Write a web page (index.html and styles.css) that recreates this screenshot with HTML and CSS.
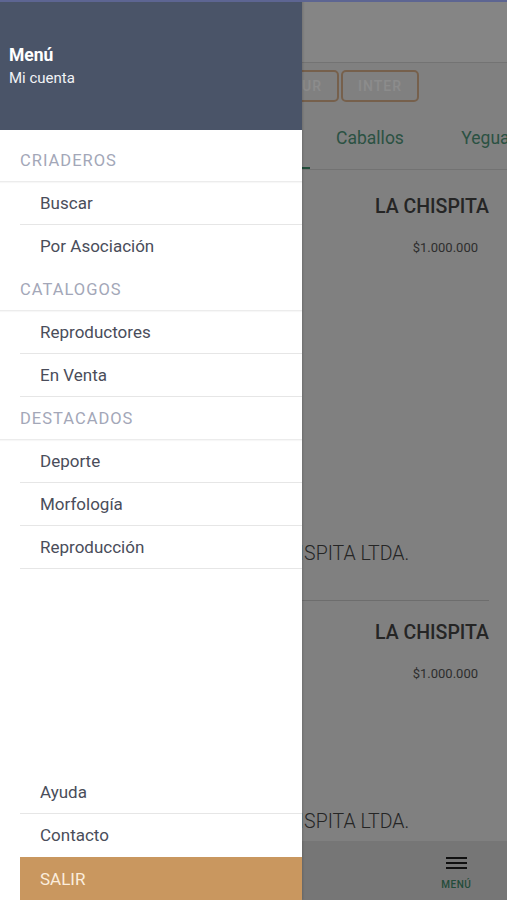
FILE: index.html
```html
<!DOCTYPE html>
<html>

<head>
  <meta name="viewport" content="width=device-width, initial-scale=1.0">
  <title>Menú</title>
  <link rel="stylesheet" href="styles.css">
</head>

<body>
  <div class="screen">
    <div class="page">
      <header class="toolbar"></header>
      <div class="filters">
        <button class="chip" type="button">AMATEUR</button>
        <button class="chip" type="button">INTER</button>
      </div>
      <nav class="tabs">
        <a class="tab active" href="#">Todos</a>
        <a class="tab" href="#">Caballos</a>
        <a class="tab" href="#">Yeguas</a>
      </nav>
      <div class="cards">
        <div class="card">
          <div class="card-top">
            <div class="photo photo-tall"></div>
            <div class="info">
              <div class="horse">LA CHISPITA</div>
              <div class="price">$1.000.000</div>
            </div>
          </div>
          <div class="owner">LA CHISPITA LTDA.</div>
        </div>
        <div class="card">
          <div class="card-top">
            <div class="photo photo-short"></div>
            <div class="info">
              <div class="horse">LA CHISPITA</div>
              <div class="price">$1.000.000</div>
            </div>
          </div>
          <div class="owner">LA CHISPITA LTDA.</div>
        </div>
      </div>
      <footer class="tabbar">
        <div class="tabbar-item"></div>
        <div class="tabbar-item"></div>
        <div class="tabbar-item"></div>
        <div class="tabbar-item"></div>
        <div class="tabbar-item">
          <span class="burger"><i></i><i></i><i></i></span>
          <span class="tabbar-label">MENÚ</span>
        </div>
      </footer>
    </div>

    <div class="backdrop"></div>

    <aside class="drawer">
      <div class="drawer-head">
        <div class="drawer-title">Menú</div>
        <div class="drawer-sub">Mi cuenta</div>
      </div>
      <ul class="menu">
        <li class="menu-section">CRIADEROS</li>
        <li class="menu-item">Buscar</li>
        <li class="menu-item no-line">Por Asociación</li>
        <li class="menu-section">CATALOGOS</li>
        <li class="menu-item">Reproductores</li>
        <li class="menu-item">En Venta</li>
        <li class="menu-section">DESTACADOS</li>
        <li class="menu-item">Deporte</li>
        <li class="menu-item">Morfología</li>
        <li class="menu-item">Reproducción</li>
      </ul>
      <ul class="menu menu-bottom">
        <li class="menu-item">Ayuda</li>
        <li class="menu-item no-line">Contacto</li>
        <li class="menu-exit">SALIR</li>
      </ul>
    </aside>

    <div class="statusline"></div>
  </div>
</body>

</html>
```

FILE: styles.css
```css
html,
body {
  margin: 0;
  padding: 0;
  height: 100%;
  overflow: hidden;
  font-family: Roboto, "Noto Sans", sans-serif;
}

.screen {
  position: relative;
  width: 507px;
  height: 900px;
  overflow: hidden;
}

/* page behind the drawer */
.page {
  display: flex;
  flex-direction: column;
  height: 100%;
  background-color: #e9e9e9;
}

.toolbar {
  height: 62px;
  flex-shrink: 0;
  background-color: #f2f2f2;
  border-bottom: 1px solid #d2d2d2;
}

.filters {
  display: flex;
  justify-content: flex-end;
  gap: 2px;
  padding: 7px 88px 0 0;
  height: 46px;
  flex-shrink: 0;
}

.chip {
  height: 32px;
  padding: 0 15px;
  border: 2px solid #d8b08a;
  border-radius: 5px;
  background: transparent;
  color: #ffffff;
  font-family: Roboto, sans-serif;
  font-size: 14px;
  font-weight: 500;
  letter-spacing: 1px;
}

.tabs {
  display: flex;
  padding-left: 190px;
  height: 53px;
  flex-shrink: 0;
  border-bottom: 1px solid #cfcfcf;
}

.tab {
  width: 120px;
  flex-shrink: 0;
  display: flex;
  align-items: center;
  justify-content: center;
  padding-bottom: 10px;
  color: #4f957a;
  font-size: 17.5px;
  text-decoration: none;
  box-sizing: border-box;
}

.tab.active {
  border-bottom: 2px solid #3c8c6a;
  padding-bottom: 8px;
}

.cards {
  flex: 1;
  padding-top: 5px;
  overflow: hidden;
}

.card {
  margin: 0 18px;
  padding: 20px 0 34px;
  border-bottom: 1px solid #c6c6c6;
}

.card-top {
  display: grid;
  grid-template-columns: 231px 1fr;
}

.photo-tall {
  height: 347px;
}

.photo-short {
  height: 189px;
}

.info {
  text-align: right;
}

.horse {
  font-size: 19.5px;
  font-weight: 500;
  line-height: 24px;
  color: #444444;
}

.price {
  margin-top: 21px;
  padding-right: 11px;
  font-size: 13px;
  line-height: 16px;
  color: #555555;
}

.owner {
  padding-left: 227px;
  font-size: 19.5px;
  font-weight: 300;
  line-height: 24px;
  color: #444444;
  white-space: nowrap;
}

.tabbar {
  display: flex;
  height: 59px;
  flex-shrink: 0;
  background-color: #d7d7d7;
}

.tabbar-item {
  flex: 1;
  display: flex;
  flex-direction: column;
  align-items: center;
  padding-top: 16px;
}

.burger {
  display: flex;
  flex-direction: column;
  gap: 3px;
  width: 21px;
}

.burger i {
  display: block;
  height: 2px;
  background-color: #1e1e1e;
}

.tabbar-label {
  margin-top: 10px;
  font-size: 10px;
  font-weight: 500;
  letter-spacing: 0.5px;
  color: #3f8a6a;
}

.backdrop {
  position: absolute;
  top: 0;
  left: 0;
  right: 0;
  bottom: 0;
  background-color: rgba(0, 0, 0, 0.45);
}

.statusline {
  position: absolute;
  top: 0;
  left: 0;
  right: 0;
  height: 2px;
  background-color: #5d6592;
}

/* side menu */
.drawer {
  position: absolute;
  top: 0;
  left: 0;
  bottom: 0;
  width: 302px;
  display: flex;
  flex-direction: column;
  background-color: #ffffff;
  box-shadow: 1px 0 2px rgba(0, 0, 0, 0.15);
}

.drawer-head {
  height: 130px;
  box-sizing: border-box;
  padding: 44px 9px 0;
  background-color: #4a5468;
  color: #ffffff;
}

.drawer-title {
  font-size: 17.5px;
  font-weight: 700;
  line-height: 22px;
}

.drawer-sub {
  margin-top: 3px;
  font-size: 15px;
  line-height: 18px;
  color: #f2f3f6;
}

.menu {
  list-style-type: none;
  margin: 0;
  padding: 9px 0 0;
}

.menu-section {
  height: 43px;
  box-sizing: border-box;
  display: flex;
  align-items: center;
  padding-left: 20px;
  font-size: 16.5px;
  letter-spacing: 1px;
  color: #a3a7b8;
  border-bottom: 1px solid #ececec;
  box-shadow: 0 1px 1px rgba(0, 0, 0, 0.03);
}

.menu-item {
  height: 43px;
  box-sizing: border-box;
  display: flex;
  align-items: center;
  margin-left: 20px;
  padding-left: 20px;
  font-size: 17px;
  color: #4a4d5a;
  border-bottom: 1px solid #e6e6e6;
}

.menu-item.no-line {
  border-bottom-color: transparent;
}

.menu-bottom {
  margin-top: auto;
  padding: 0;
}

.menu-exit {
  height: 43px;
  box-sizing: border-box;
  display: flex;
  align-items: center;
  margin-left: 20px;
  padding-left: 20px;
  font-size: 17px;
  color: #fbeddd;
  background-color: #c9975f;
}
```
